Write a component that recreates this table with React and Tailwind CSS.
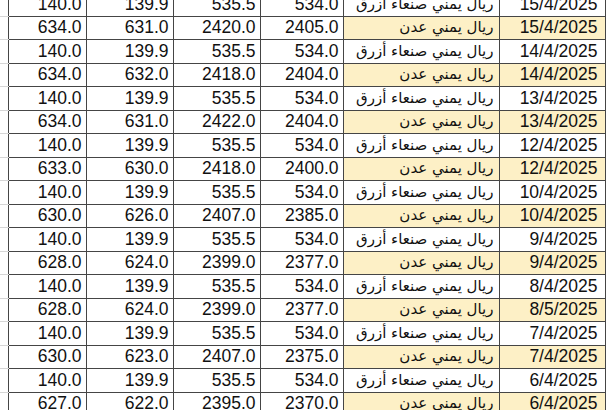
const rows = [
  ["140.0", "139.9", "535.5", "534.0", "s", "15/4/2025"],
  ["634.0", "631.0", "2420.0", "2405.0", "a", "15/4/2025"],
  ["140.0", "139.9", "535.5", "534.0", "s", "14/4/2025"],
  ["634.0", "632.0", "2418.0", "2404.0", "a", "14/4/2025"],
  ["140.0", "139.9", "535.5", "534.0", "s", "13/4/2025"],
  ["634.0", "631.0", "2422.0", "2404.0", "a", "13/4/2025"],
  ["140.0", "139.9", "535.5", "534.0", "s", "12/4/2025"],
  ["633.0", "630.0", "2418.0", "2400.0", "a", "12/4/2025"],
  ["140.0", "139.9", "535.5", "534.0", "s", "10/4/2025"],
  ["630.0", "626.0", "2407.0", "2385.0", "a", "10/4/2025"],
  ["140.0", "139.9", "535.5", "534.0", "s", "9/4/2025"],
  ["628.0", "624.0", "2399.0", "2377.0", "a", "9/4/2025"],
  ["140.0", "139.9", "535.5", "534.0", "s", "8/4/2025"],
  ["628.0", "624.0", "2399.0", "2377.0", "a", "8/5/2025"],
  ["140.0", "139.9", "535.5", "534.0", "s", "7/4/2025"],
  ["630.0", "623.0", "2407.0", "2375.0", "a", "7/4/2025"],
  ["140.0", "139.9", "535.5", "534.0", "s", "6/4/2025"],
  ["627.0", "622.0", "2395.0", "2370.0", "a", "6/4/2025"],
];

const SANAA = "ريال يمني صنعاء أزرق";
const ADEN = "ريال يمني عدن";

export default function App() {
  return (
    <div className="w-[608px] h-[410px] overflow-hidden bg-white">
      <table
        className="-mt-[8px] border-collapse table-fixed w-[605px] text-[17.5px] leading-none text-[#111]"
        style={{ fontFamily: '"Liberation Sans", "DejaVu Sans", sans-serif' }}
      >
        <colgroup>
          <col className="w-[8px]" />
          <col className="w-[78px]" />
          <col className="w-[87px]" />
          <col className="w-[87px]" />
          <col className="w-[83px]" />
          <col className="w-[156px]" />
          <col className="w-[106px]" />
        </colgroup>
        <tbody>
          {rows.map((r, i) => {
            const aden = r[4] === "a";
            const fill = aden ? "bg-[#fdf0c6]" : "bg-white";
            return (
              <tr key={i} className="h-[23.5px]">
                <td className="p-0 border-b border-[#d6d6d6]"></td>
                <td className="p-0 pr-[4px] text-right border border-[#454545]">{r[0]}</td>
                <td className="p-0 pr-[4px] text-right border border-[#454545]">{r[1]}</td>
                <td className="p-0 pr-[4px] text-right border border-[#454545]">{r[2]}</td>
                <td className="p-0 pr-[4px] text-right border border-[#454545]">{r[3]}</td>
                <td
                  dir="rtl"
                  className={`p-0 pr-[5px] text-right border border-[#454545] text-[15px] ${fill}`}
                  style={{ fontFamily: '"DejaVu Sans", sans-serif' }}
                >
                  {aden ? ADEN : SANAA}
                </td>
                <td className={`p-0 pr-[7px] text-right border border-[#454545] ${fill}`}>{r[5]}</td>
              </tr>
            );
          })}
        </tbody>
      </table>
    </div>
  );
}
